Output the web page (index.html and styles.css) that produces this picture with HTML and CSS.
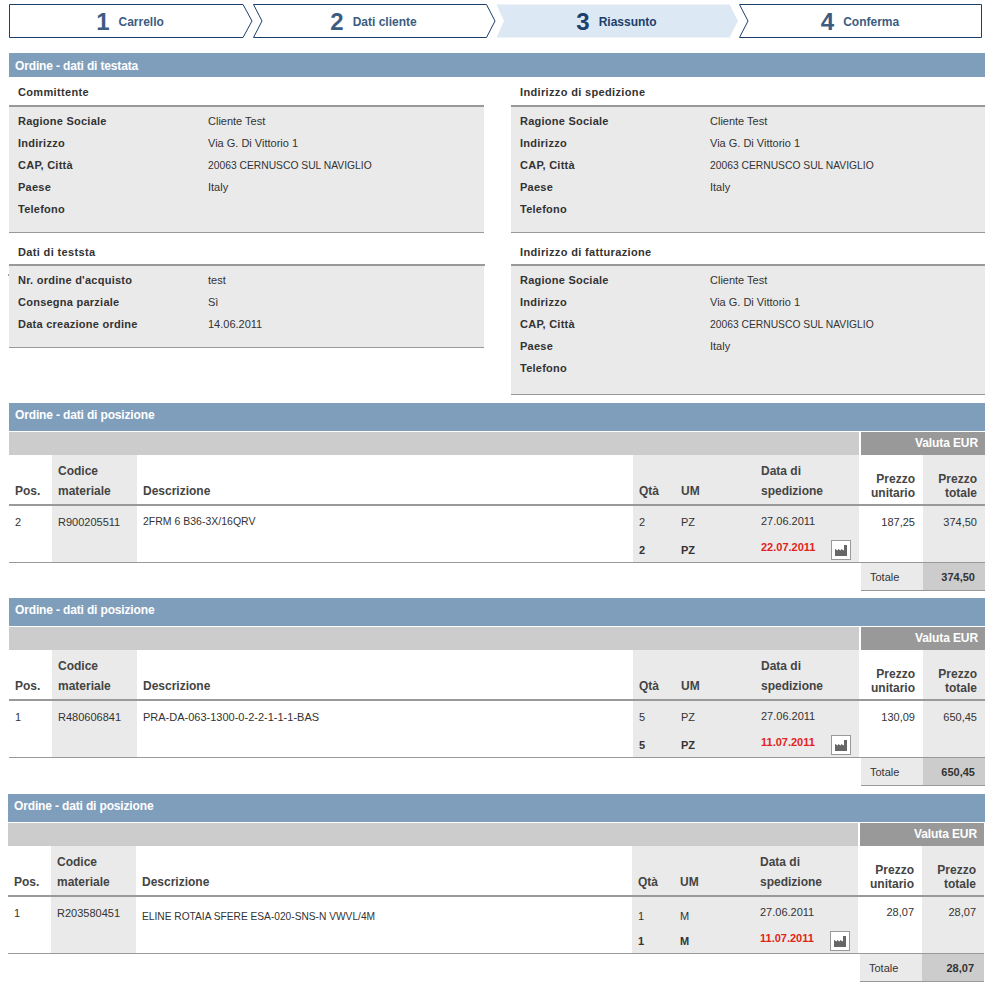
FILE: index.html
```html
<!DOCTYPE html>
<html lang="it">

<head>
    <meta charset="utf-8">
    <title>Riassunto ordine</title>
    <link rel="stylesheet" href="styles.css">
</head>

<body>
    <!-- step bar -->
    <div class="steps">
        <div class="step step-first">
            <svg class="step-shape" width="244" height="34" viewBox="0 0 244 34"><path d="M.5 .5H234L243 17L234 33.5H.5Z" /></svg>
            <span class="step-num">1</span><span class="step-label">Carrello</span>
        </div>
        <div class="step">
            <svg class="step-shape" width="243" height="34" viewBox="0 0 243 34"><path d="M.5 .5H233.5L242 17L233.5 33.5H.5L9 17Z" /></svg>
            <span class="step-num">2</span><span class="step-label">Dati cliente</span>
        </div>
        <div class="step step-current">
            <svg class="step-shape" width="243" height="34" viewBox="0 0 243 34"><path d="M.5 .5H233.5L242 17L233.5 33.5H.5L8 17Z" /></svg>
            <span class="step-num">3</span><span class="step-label">Riassunto</span>
        </div>
        <div class="step step-last">
            <svg class="step-shape" width="243" height="34" viewBox="0 0 243 34"><path d="M.5 .5H242.5V33.5H.5L9 17Z" /></svg>
            <span class="step-num">4</span><span class="step-label">Conferma</span>
        </div>
    </div>

    <div class="bar bar-head">Ordine - dati di testata</div>

    <div class="info">
        <div class="info-col info-col-left">
            <div class="info-title">Committente</div>
            <div class="info-box">
                <div class="info-row"><span class="info-label">Ragione Sociale</span><span>Cliente Test</span></div>
                <div class="info-row"><span class="info-label">Indirizzo</span><span>Via G. Di Vittorio 1</span></div>
                <div class="info-row"><span class="info-label">CAP, Città</span><span class="caps">20063 CERNUSCO SUL NAVIGLIO</span></div>
                <div class="info-row"><span class="info-label">Paese</span><span>Italy</span></div>
                <div class="info-row"><span class="info-label">Telefono</span><span></span></div>
            </div>
            <div class="info-title info-title-next info-title-long">Dati di teststa</div>
            <div class="info-box info-box-mark">
                <div class="info-row"><span class="info-label">Nr. ordine d'acquisto</span><span>test</span></div>
                <div class="info-row"><span class="info-label">Consegna parziale</span><span>Sì</span></div>
                <div class="info-row"><span class="info-label">Data creazione ordine</span><span>14.06.2011</span></div>
            </div>
        </div>
        <div class="info-col">
            <div class="info-title">Indirizzo di spedizione</div>
            <div class="info-box">
                <div class="info-row"><span class="info-label">Ragione Sociale</span><span>Cliente Test</span></div>
                <div class="info-row"><span class="info-label">Indirizzo</span><span>Via G. Di Vittorio 1</span></div>
                <div class="info-row"><span class="info-label">CAP, Città</span><span class="caps">20063 CERNUSCO SUL NAVIGLIO</span></div>
                <div class="info-row"><span class="info-label">Paese</span><span>Italy</span></div>
                <div class="info-row"><span class="info-label">Telefono</span><span></span></div>
            </div>
            <div class="info-title info-title-next">Indirizzo di fatturazione</div>
            <div class="info-box info-box-tall">
                <div class="info-row"><span class="info-label">Ragione Sociale</span><span>Cliente Test</span></div>
                <div class="info-row"><span class="info-label">Indirizzo</span><span>Via G. Di Vittorio 1</span></div>
                <div class="info-row"><span class="info-label">CAP, Città</span><span class="caps">20063 CERNUSCO SUL NAVIGLIO</span></div>
                <div class="info-row"><span class="info-label">Paese</span><span>Italy</span></div>
                <div class="info-row"><span class="info-label">Telefono</span><span></span></div>
            </div>
        </div>
    </div>

    <!-- position 1 -->
    <div class="pos">
        <div class="bar bar-pos">Ordine - dati di posizione</div>
        <table class="pos-table">
            <colgroup><col class="c-pos"><col class="c-code"><col class="c-desc"><col class="c-qty"><col class="c-um"><col class="c-date"><col class="c-unit"><col class="c-total"></colgroup>
            <tr class="row-band"><td colspan="6" class="band"></td><td colspan="2" class="currency">Valuta EUR</td></tr>
            <tr class="row-head">
                <th>Pos.</th><th class="shade">Codice<br>materiale</th><th>Descrizione</th><th class="shade">Qtà</th><th class="shade">UM</th><th class="shade">Data di<br>spedizione</th>
                <th class="price-head">Prezzo<br>unitario</th><th class="price-head shade">Prezzo<br>totale</th>
            </tr>
            <tr class="row-body">
                <td>2</td><td class="shade">R900205511</td><td class="desc desc-short">2FRM 6 B36-3X/16QRV</td>
                <td class="shade"><div class="qty-line">2</div><div class="qty-line qty-conf">2</div></td>
                <td class="shade"><div class="qty-line">PZ</div><div class="qty-line qty-conf">PZ</div></td>
                <td class="shade"><div class="date-line">27.06.2011</div><div class="date-conf"><span>22.07.2011</span><span class="plant"><svg width="12" height="11" viewBox="0 0 12 11"><path d="M0 11V4L3 5.5V4L6 5.5V4L9 5.5V0H12V11Z" /></svg></span></div></td>
                <td class="price">187,25</td><td class="price shade">374,50</td>
            </tr>
            <tr class="row-sum"><td colspan="6" class="sum-gap"></td><td class="sum-label">Totale</td><td class="sum-value">374,50</td></tr>
        </table>
    </div>

    <!-- position 2 -->
    <div class="pos">
        <div class="bar bar-pos">Ordine - dati di posizione</div>
        <table class="pos-table">
            <colgroup><col class="c-pos"><col class="c-code"><col class="c-desc"><col class="c-qty"><col class="c-um"><col class="c-date"><col class="c-unit"><col class="c-total"></colgroup>
            <tr class="row-band"><td colspan="6" class="band"></td><td colspan="2" class="currency">Valuta EUR</td></tr>
            <tr class="row-head">
                <th>Pos.</th><th class="shade">Codice<br>materiale</th><th>Descrizione</th><th class="shade">Qtà</th><th class="shade">UM</th><th class="shade">Data di<br>spedizione</th>
                <th class="price-head">Prezzo<br>unitario</th><th class="price-head shade">Prezzo<br>totale</th>
            </tr>
            <tr class="row-body">
                <td>1</td><td class="shade">R480606841</td><td class="desc">PRA-DA-063-1300-0-2-2-1-1-1-BAS</td>
                <td class="shade"><div class="qty-line">5</div><div class="qty-line qty-conf">5</div></td>
                <td class="shade"><div class="qty-line">PZ</div><div class="qty-line qty-conf">PZ</div></td>
                <td class="shade"><div class="date-line">27.06.2011</div><div class="date-conf"><span>11.07.2011</span><span class="plant"><svg width="12" height="11" viewBox="0 0 12 11"><path d="M0 11V4L3 5.5V4L6 5.5V4L9 5.5V0H12V11Z" /></svg></span></div></td>
                <td class="price">130,09</td><td class="price shade">650,45</td>
            </tr>
            <tr class="row-sum"><td colspan="6" class="sum-gap"></td><td class="sum-label">Totale</td><td class="sum-value">650,45</td></tr>
        </table>
    </div>

    <!-- position 3 -->
    <div class="pos pos-last">
        <div class="bar bar-pos">Ordine - dati di posizione</div>
        <table class="pos-table">
            <colgroup><col class="c-pos"><col class="c-code"><col class="c-desc"><col class="c-qty"><col class="c-um"><col class="c-date"><col class="c-unit"><col class="c-total"></colgroup>
            <tr class="row-band"><td colspan="6" class="band"></td><td colspan="2" class="currency">Valuta EUR</td></tr>
            <tr class="row-head">
                <th>Pos.</th><th class="shade">Codice<br>materiale</th><th>Descrizione</th><th class="shade">Qtà</th><th class="shade">UM</th><th class="shade">Data di<br>spedizione</th>
                <th class="price-head">Prezzo<br>unitario</th><th class="price-head shade">Prezzo<br>totale</th>
            </tr>
            <tr class="row-body">
                <td>1</td><td class="shade">R203580451</td><td class="desc desc-long">ELINE ROTAIA SFERE ESA-020-SNS-N VWVL/4M</td>
                <td class="shade"><div class="qty-line qty-low">1</div><div class="qty-line qty-conf">1</div></td>
                <td class="shade"><div class="qty-line qty-low">M</div><div class="qty-line qty-conf">M</div></td>
                <td class="shade"><div class="date-line">27.06.2011</div><div class="date-conf"><span>11.07.2011</span><span class="plant"><svg width="12" height="11" viewBox="0 0 12 11"><path d="M0 11V4L3 5.5V4L6 5.5V4L9 5.5V0H12V11Z" /></svg></span></div></td>
                <td class="price">28,07</td><td class="price shade">28,07</td>
            </tr>
            <tr class="row-sum"><td colspan="6" class="sum-gap"></td><td class="sum-label">Totale</td><td class="sum-value">28,07</td></tr>
        </table>
    </div>
</body>

</html>
```

FILE: styles.css
```css
html,
body {
    margin: 0;
    padding: 0;
    background-color: #ffffff;
}

body {
    padding: 4px 4px 0 9px;
    font-family: "Liberation Sans", Arial, sans-serif;
    font-size: 11px;
    color: #333333;
}

/* uppercase strings run narrower than 11px in the reference */
.caps {
    font-size: 10.3px;
    line-height: 23px;
}

/* step bar */
.steps {
    display: flex;
    gap: 1px;
    height: 34px;
    margin-bottom: 15px;
}

.step {
    position: relative;
    display: flex;
    align-items: center;
    justify-content: center;
    gap: 9px;
    box-sizing: border-box;
    width: 242px;
    padding: 1px 1px 0 0;
    color: #3d5c82;
}

.step-first,
.step-last {
    width: 243px;
}

.step-shape {
    position: absolute;
    top: 0;
    left: 0;
    fill: #ffffff;
    stroke: #1c3f6b;
    stroke-width: 1;
}

.step-current {
    color: #1c3f6b;
}

.step-current .step-shape {
    fill: #dce8f4;
    stroke: none;
}

.step-num {
    position: relative;
    font-size: 24px;
    font-weight: bold;
}

.step-label {
    position: relative;
    font-size: 12px;
    font-weight: bold;
}

/* blue bars */
.bar {
    padding-left: 6px;
    background-color: #7f9ebc;
    color: #ffffff;
    font-size: 12px;
    font-weight: bold;
    letter-spacing: -0.15px;
}

.bar-head {
    height: 24px;
    line-height: 26px;
}

.bar-pos {
    height: 28px;
    line-height: 25px;
    margin-bottom: 1px;
}

/* address blocks */
.info {
    display: flex;
    justify-content: space-between;
    margin-bottom: 8px;
}

.info-col {
    width: 474px;
}

.info-col-left {
    width: 475px;
}

.info-title {
    height: 25px;
    padding: 3px 0 0 9px;
    line-height: 24px;
    font-weight: bold;
    letter-spacing: 0.35px;
    border-bottom: 2px solid #999999;
}

.info-title-next {
    height: 24px;
    padding-top: 7px;
}

.info-title-long {
    margin-right: -1px;
}

.info-box {
    position: relative;
    padding: 3px 9px 12px;
    background-color: #eaeaea;
    border-bottom: 1px solid #999999;
}

.info-box-tall {
    padding-bottom: 15px;
}

.info-box-mark::before {
    content: '';
    position: absolute;
    top: 8px;
    left: -1px;
    width: 1px;
    height: 2px;
    background-color: #999999;
}

.info-row {
    display: flex;
    height: 22px;
    line-height: 22px;
}

.info-label {
    width: 190px;
    font-weight: bold;
    letter-spacing: 0.25px;
}

/* position tables */
.pos {
    margin-bottom: 7px;
}

.pos + .pos-last {
    margin-top: 8px;
    margin-left: -1px;
    margin-bottom: 0;
}

.pos-table {
    width: 976px;
    table-layout: fixed;
    border-collapse: separate;
    border-spacing: 0;
    font-size: 11px;
}

.c-pos { width: 43px; }
.c-code { width: 85px; }
.c-desc { width: 496px; }
.c-qty { width: 42px; }
.c-um { width: 80px; }
.c-date { width: 104px; }
.c-unit { width: 64px; }
.c-total { width: 62px; }

.pos-table td,
.pos-table th {
    padding: 0 0 0 6px;
}

.pos-table .shade {
    background-color: #eaeaea;
}

.row-band td {
    height: 23px;
}

.pos-table .band {
    background-color: #cccccc;
    padding: 0;
}

.pos-table .currency {
    padding: 0 7px 2px 0;
    box-sizing: border-box;
    background-color: #999999;
    border-left: 2px solid #ffffff;
    color: #ffffff;
    font-size: 12px;
    font-weight: bold;
    letter-spacing: -0.1px;
    text-align: right;
}

.pos-table .row-head th {
    height: 51px;
    padding-bottom: 3px;
    box-sizing: border-box;
    border-bottom: 2px solid #999999;
    color: #444444;
    font-size: 12px;
    line-height: 20px;
    text-align: left;
    vertical-align: bottom;
}

.pos-table .row-head .price-head {
    padding: 0 8px 4px 0;
    line-height: 14px;
    text-align: right;
}

.pos-table .row-body td {
    height: 57px;
    box-sizing: border-box;
    padding-top: 8px;
    vertical-align: top;
    border-bottom: 1px solid #999999;
    line-height: 16px;
}

.pos-table .row-body .desc-short {
    padding-top: 7px;
    font-size: 10.5px;
}

.pos-table .row-body .desc-long {
    padding-top: 12px;
    font-size: 10.2px;
}

.qty-line {
    height: 28px;
}

.qty-conf {
    height: 16px;
    font-weight: bold;
}

.qty-low {
    position: relative;
    top: 3px;
}

.date-line {
    height: 26px;
    margin-top: -1px;
}

.date-conf {
    display: flex;
    justify-content: space-between;
    align-items: flex-start;
    padding-right: 8px;
    color: #e2231a;
    font-weight: bold;
}

.plant {
    display: flex;
    align-items: center;
    justify-content: center;
    box-sizing: border-box;
    width: 20px;
    height: 20px;
    margin-top: 1px;
    background-color: #ffffff;
    border: 1px solid #999999;
    fill: #666666;
}

.pos-table .row-body .price {
    padding: 8px 8px 0 0;
    text-align: right;
}

.pos-last .row-body .price {
    padding-top: 7px;
}

.row-sum td {
    height: 28px;
    box-sizing: border-box;
}

.pos-table .sum-gap {
    padding: 0;
}

.pos-table .sum-label {
    padding-left: 9px;
    background-color: #eaeaea;
    border-left: 2px solid #ffffff;
    box-shadow: inset 0 -1px 0 #999999;
}

.pos-table .sum-value {
    padding: 0 10px 0 0;
    background-color: #cccccc;
    box-shadow: inset 0 -1px 0 #999999;
    font-weight: bold;
    text-align: right;
}
```
